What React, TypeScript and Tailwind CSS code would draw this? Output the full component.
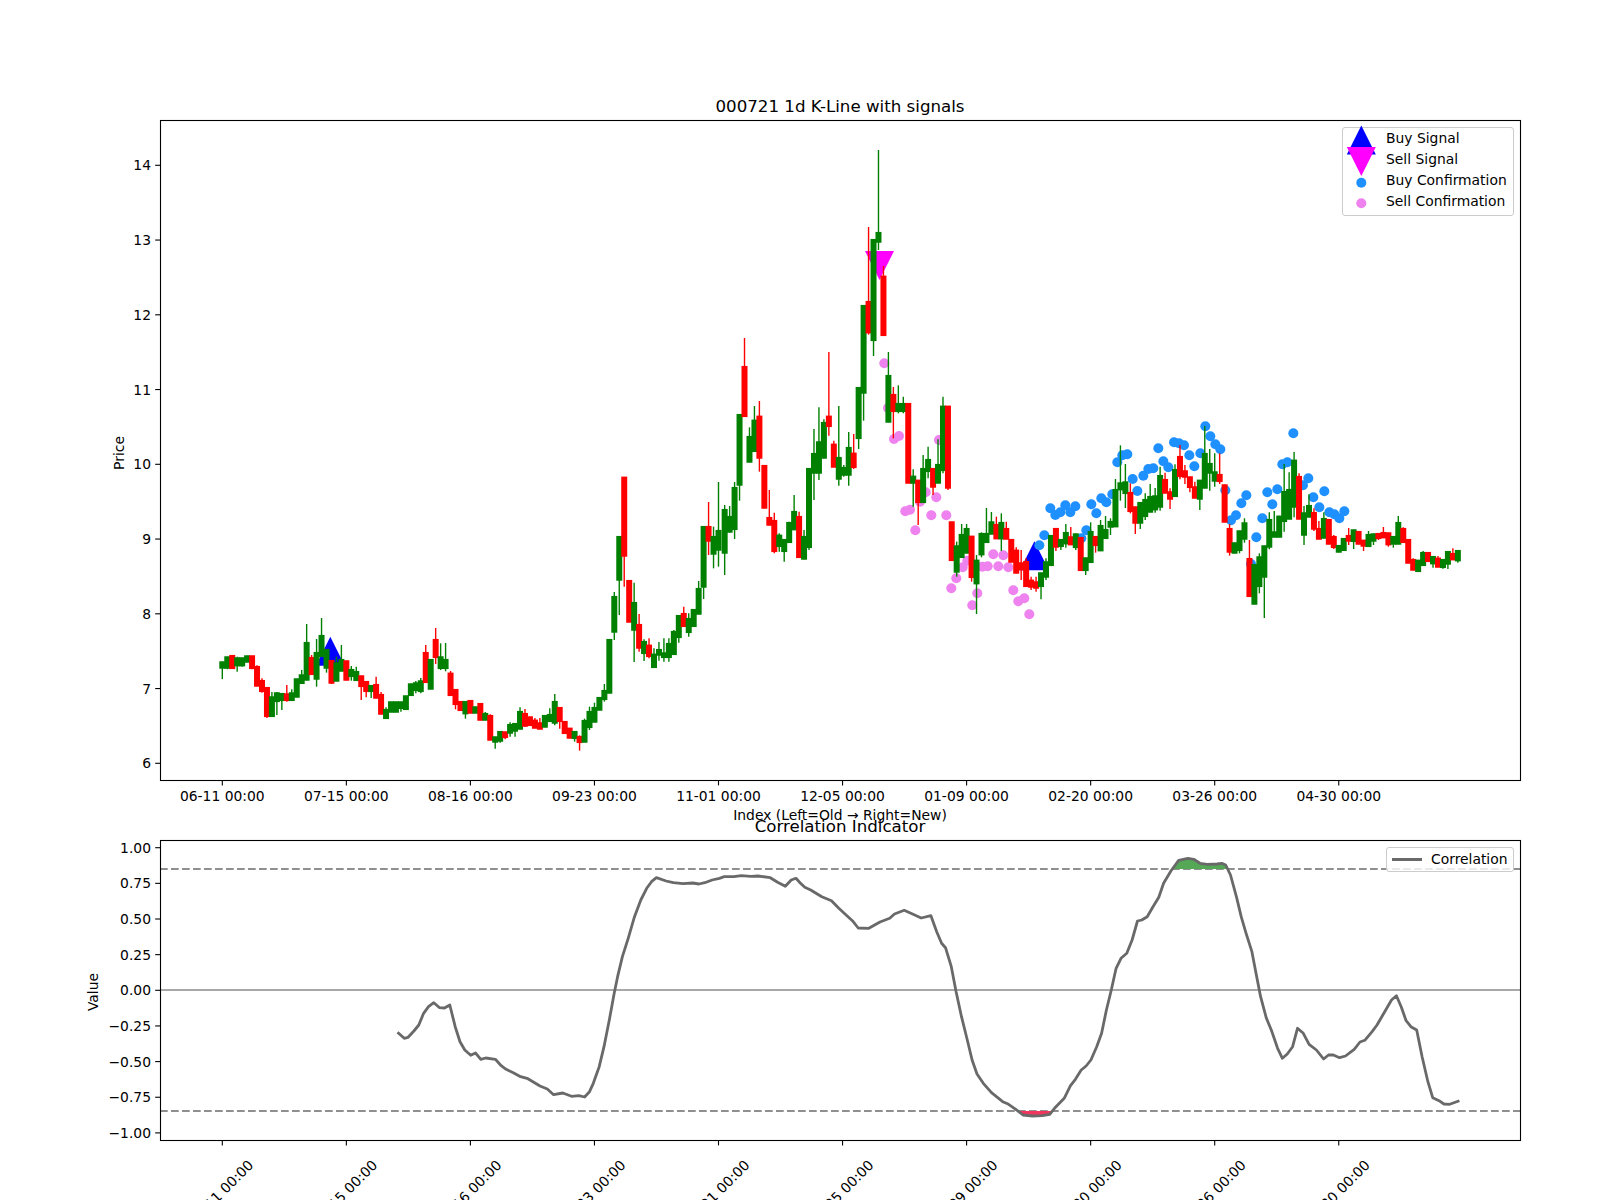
import React from 'react';

type Row = [string, number, number, number, number];
type Candle = { up: boolean; wickTop: number; top: number; bottom: number; wickBottom: number };

// readings are in 3x crop pixels, y = base + z / 3
const seg = (base: number, rows: Row[]): Candle[] =>
  rows.map(([c, a, b, d, e]) => ({
    up: c === 'g',
    wickTop: base + a / 3,
    top: base + b / 3,
    bottom: base + d / 3,
    wickBottom: base + e / 3,
  }));

const candles: Candle[] = [
  ...seg(480, [
    ['g', 545, 545, 565, 597], ['g', 530, 530, 565, 568], ['r', 526, 526, 566, 566], ['g', 530, 533, 558, 575],
    ['g', 533, 533, 558, 560], ['g', 527, 527, 547, 547], ['r', 527, 527, 566, 568], ['r', 556, 559, 619, 619],
    ['r', 595, 601, 635, 638], ['r', 622, 622, 710, 714], ['g', 636, 650, 710, 710], ['g', 636, 638, 665, 705],
    ['g', 640, 640, 662, 690], ['r', 615, 641, 662, 665], ['g', 628, 638, 662, 662], ['g', 596, 596, 652, 652],
    ['g', 570, 584, 611, 611], ['g', 432, 487, 601, 601], ['r', 525, 532, 584, 584], ['g', 477, 517, 598, 620],
    ['g', 414, 466, 530, 530], ['g', 508, 508, 565, 578], ['r', 540, 541, 610, 612], ['g', 530, 548, 604, 604],
    ['g', 495, 538, 574, 574], ['r', 542, 542, 601, 601], ['g', 558, 568, 590, 602], ['g', 560, 574, 602, 602],
    ['r', 587, 587, 620, 660], ['r', 604, 604, 635, 652], ['g', 616, 616, 635, 654], ['r', 590, 613, 655, 655],
    ['r', 636, 643, 703, 703], ['g', 682, 688, 716, 716], ['g', 665, 665, 697, 697], ['g', 665, 665, 697, 697],
    ['g', 665, 665, 686, 695], ['g', 647, 647, 689, 689], ['g', 611, 611, 647, 647], ['g', 603, 608, 632, 640],
    ['g', 594, 602, 635, 640], ['r', 495, 517, 608, 608], ['g', 538, 538, 628, 628], ['r', 444, 478, 533, 552],
    ['g', 490, 530, 566, 570], ['g', 489, 538, 566, 574], ['r', 573, 579, 647, 647], ['r', 628, 628, 674, 688],
    ['r', 664, 664, 692, 692], ['g', 664, 664, 702, 716], ['r', 661, 661, 700, 700], ['g', 680, 680, 700, 700],
    ['r', 670, 670, 721, 721], ['g', 696, 700, 721, 721], ['r', 703, 706, 781, 781], ['g', 770, 770, 787, 806],
    ['g', 754, 754, 784, 788], ['r', 755, 755, 773, 778], ['g', 727, 733, 760, 770], ['g', 730, 730, 754, 770],
    ['g', 682, 694, 748, 748], ['r', 687, 700, 739, 741], ['r', 710, 710, 737, 737], ['r', 714, 720, 745, 745],
    ['r', 714, 728, 748, 748], ['g', 706, 706, 742, 742], ['g', 685, 703, 725, 725], ['g', 642, 664, 730, 736],
    ['r', 682, 682, 725, 746], ['r', 724, 724, 761, 761], ['r', 744, 744, 775, 775], ['g', 754, 754, 776, 785],
    ['r', 766, 769, 788, 812], ['g', 716, 721, 787, 787], ['g', 680, 694, 743, 750], ['g', 668, 682, 727, 727],
    ['g', 652, 652, 691, 691], ['g', 612, 631, 659, 665], ['g', 478, 478, 640, 640], ['g', 336, 349, 457, 480],
    ['g', 169, 169, 301, 405], ['r', -9, -9, 229, 320], ['r', 301, 301, 427, 427], ['g', 308, 367, 451, 546],
    ['r', 402, 433, 505, 515], ['g', 478, 484, 521, 543],
  ]),
  ...seg(470, [
    ['r', 505, 525, 560, 565], ['g', 535, 552, 593, 593], ['g', 516, 538, 556, 572], ['g', 505, 548, 563, 575],
    ['g', 505, 520, 563, 575], ['g', 480, 484, 554, 554], ['g', 436, 436, 503, 518], ['r', 410, 430, 470, 470],
    ['g', 430, 445, 488, 500], ['g', 418, 418, 470, 470], ['g', 333, 355, 433, 433], ['g', 169, 169, 352, 387],
    ['r', 96, 169, 214, 255], ['g', 170, 199, 253, 295], ['g', 36, 181, 241, 290], ['g', 105, 118, 250, 315],
    ['g', 108, 139, 187, 187], ['g', 36, 52, 179, 207], ['g', -167, -167, 46, 92],
  ]),
  ...seg(130, [
    ['r', 624, 709, 860, 860], ['g', 892, 919, 997, 997], ['g', 828, 870, 965, 965], ['r', 813, 858, 985, 1025],
    ['r', 1006, 1006, 1135, 1135], ['r', 1080, 1162, 1186, 1186], ['r', 1148, 1171, 1265, 1270], ['g', 1210, 1215, 1250, 1265],
    ['g', 1228, 1228, 1265, 1295], ['g', 1175, 1177, 1238, 1238], ['g', 1095, 1144, 1200, 1200], ['r', 1145, 1159, 1283, 1283],
    ['g', 1200, 1219, 1288, 1288], ['g', 1015, 1015, 1253, 1260], ['g', 897, 970, 1030, 1110], ['g', 832, 935, 1030, 1050],
    ['g', 868, 877, 985, 985], ['r', 666, 858, 890, 917], ['r', 932, 942, 1012, 1012], ['g', 828, 982, 1048, 1067],
    ['g', 1005, 1012, 1036, 1040], ['g', 906, 952, 1036, 1067], ['r', 912, 969, 1013, 1017], ['g', 772, 772, 926, 957],
    ['g', 526, 526, 790, 872], ['r', 291, 514, 609, 614], ['g', 328, 328, 632, 678], ['g', 60, 307, 337, 360],
    ['r', 408, 438, 617, 617], ['g', 666, 736, 877, 877], ['r', 771, 793, 845, 925], ['g', 766, 820, 845, 850],
    ['g', 800, 820, 845, 850], ['r', 820, 820, 1060, 1060], ['g', 1018, 1038, 1060, 1130], ['r', 1050, 1050, 1118, 1185],
    ['g', 975, 1015, 1118, 1118], ['g', 950, 988, 1025, 1045], ['r', 1015, 1015, 1072, 1095], ['g', 928, 1003, 1060, 1060],
    ['g', 800, 828, 1022, 1030], ['r', 828, 828, 1075, 1080],
  ]),
  ...seg(470, [
    ['r', 155, 155, 272, 272], ['g', 215, 227, 307, 320], ['g', 162, 193, 263, 263], ['g', 162, 175, 250, 250],
    ['r', 198, 198, 323, 335], ['g', 255, 270, 342, 432], ['g', 187, 190, 255, 262], ['g', 114, 190, 218, 218],
    ['g', 126, 155, 193, 193], ['r', 140, 163, 207, 207], ['g', 130, 157, 207, 243], ['r', 155, 175, 208, 208],
    ['r', 208, 208, 277, 277], ['r', 232, 240, 310, 310],
  ]),
  ...seg(380, [
    ['r', 510, 548, 570, 600], ['r', 535, 544, 620, 620], ['r', 590, 600, 622, 630], ['r', 590, 605, 625, 635],
    ['g', 578, 578, 620, 658], ['g', 535, 545, 592, 600], ['g', 466, 466, 557, 557], ['r', 445, 445, 502, 513],
    ['g', 478, 478, 500, 510], ['g', 432, 457, 492, 503], ['r', 441, 470, 495, 495], ['g', 461, 461, 503, 510],
    ['r', 472, 472, 572, 572], ['g', 533, 533, 572, 585], ['g', 427, 454, 548, 548], ['r', 469, 469, 497, 518],
    ['g', 420, 436, 513, 513], ['g', 408, 448, 476, 476], ['g', 415, 424, 442, 465], ['g', 297, 328, 441, 441],
    ['g', 196, 308, 330, 362], ['g', 252, 305, 341, 384], ['r', 310, 337, 395, 400], ['r', 380, 380, 430, 462],
    ['g', 367, 367, 430, 447], ['g', 340, 358, 410, 420], ['g', 312, 349, 397, 397], ['g', 324, 347, 390, 398],
    ['g', 260, 286, 382, 392], ['r', 278, 298, 340, 340], ['r', 325, 335, 358, 387], ['g', 253, 268, 350, 350],
    ['r', 195, 229, 290, 298], ['r', 255, 272, 292, 312], ['r', 290, 290, 323, 337], ['r', 305, 320, 355, 355],
    ['g', 300, 300, 358, 390], ['g', 138, 220, 325, 325], ['g', 207, 250, 280, 332], ['g', 220, 275, 304, 320],
    ['r', 220, 283, 305, 312], ['r', 314, 314, 427, 427], ['r', 432, 445, 517, 527], ['g', 488, 488, 520, 520],
    ['g', 452, 452, 512, 520], ['g', 415, 428, 478, 488], ['r', 480, 535, 650, 650], ['g', 553, 553, 673, 673],
    ['g', 520, 530, 620, 640], ['g', 497, 497, 592, 714], ['g', 397, 418, 502, 508], ['g', 393, 455, 472, 472],
    ['g', 407, 408, 472, 472], ['g', 252, 334, 425, 455], ['g', 277, 328, 418, 418], ['g', 216, 240, 382, 412],
    ['r', 280, 289, 418, 418], ['g', 378, 398, 466, 495], ['g', 343, 376, 412, 412], ['r', 385, 397, 448, 453],
    ['r', 423, 445, 478, 478], ['g', 397, 415, 475, 475], ['r', 418, 418, 493, 493], ['r', 465, 469, 503, 507],
    ['g', 496, 496, 517, 517], ['g', 475, 475, 512, 512], ['r', 444, 466, 484, 495], ['g', 449, 449, 485, 507],
    ['r', 454, 454, 493, 493], ['r', 480, 480, 499, 513], ['g', 453, 463, 500, 500], ['g', 461, 461, 484, 495],
    ['r', 460, 460, 476, 480], ['r', 441, 457, 474, 474], ['r', 458, 458, 495, 500], ['g', 469, 469, 493, 503],
    ['g', 408, 427, 493, 493], ['r', 442, 445, 488, 488], ['r', 478, 478, 550, 550], ['r', 535, 538, 571, 571],
    ['g', 540, 540, 575, 575], ['g', 513, 517, 557, 557], ['r', 517, 517, 545, 545], ['g', 529, 529, 552, 563],
    ['r', 528, 534, 562, 562], ['g', 538, 538, 563, 566], ['g', 514, 514, 553, 567], ['r', 505, 520, 540, 540],
    ['g', 511, 511, 543, 548],
  ]),
];

const buyDots = [
  [58, 496], [73, 466], [91, 385], [106, 405], [121, 397], [136, 376], [151, 397], [166, 379], [184, 475], [199, 451],
  [214, 373], [229, 400], [244, 355], [259, 367], [277, 343], [292, 247], [307, 226], [322, 223], [338, 297], [352, 333],
  [370, 287], [385, 267], [400, 265], [415, 205], [430, 244], [445, 262], [462, 187], [477, 190], [492, 196], [508, 226],
  [523, 259], [541, 220], [556, 139], [571, 169], [586, 193], [601, 208], [616, 331], [633, 421], [648, 406], [664, 370],
  [679, 346], [693, 552], [709, 472], [727, 415], [742, 337], [757, 373], [772, 328], [787, 253], [802, 247], [820, 160],
  [849, 316], [865, 295], [880, 352], [898, 382], [913, 334], [928, 397], [943, 403], [958, 415], [973, 394],
].map(([x, y]) => [1020 + x / 3, 380 + y / 3]);

const sellDots = [
  [884.3, 363.3], [888, 408], [894, 439], [899, 436], [939, 440], [905.3, 511.3], [910, 509.7], [915.3, 530.3],
  [920, 501.7], [925.7, 492.3], [931.3, 515.3], [936.3, 497.3], [946.3, 515.3], [951.3, 588.3], [956.3, 578.3],
  [962.7, 567.3], [967.3, 560.7], [972.3, 605.3], [977.3, 593.3], [982.3, 566.7], [987.7, 566.3], [993.3, 554.3],
  [998.3, 566.3], [1003.3, 555.3], [1008.3, 567.3], [1013.3, 590.3], [1018.3, 601.3], [1024.3, 598.3], [1029.3, 614.3],
];

const corrLeft = [
  [696, 697], [710, 715], [718, 712], [730, 693], [740, 675], [750, 640], [760, 620], [771, 608], [783, 623], [793, 624],
  [804, 615], [815, 680], [825, 725], [835, 750], [847, 766], [857, 759], [868, 778], [878, 774], [898, 778], [910, 797],
  [920, 808], [935, 818], [950, 830], [965, 836], [990, 858], [1005, 867], [1018, 884], [1037, 879], [1055, 889], [1070, 887],
  [1082, 891], [1092, 875], [1100, 850], [1112, 800], [1122, 740], [1133, 660], [1143, 580], [1150, 530], [1160, 470], [1172, 415],
  [1185, 350], [1198, 300], [1210, 265], [1220, 245], [1230, 233], [1250, 243], [1265, 248], [1285, 251], [1305, 249], [1318, 252],
  [1330, 248], [1345, 240], [1360, 235], [1370, 230], [1390, 230], [1405, 227], [1425, 229], [1440, 228], [1465, 233], [1480, 247],
  [1496, 259], [1508, 240], [1518, 235],
].map(([x, y]) => [60 + x / 2.0625, 800 + y / 3]);

const crop8 = ([x, y]: number[]) => [800 + x / 2.0625, 800 + y / 3];

const corrRight = [
  [0, 248], [10, 262], [22, 270], [45, 290], [65, 302], [80, 325], [95, 345], [108, 362], [120, 384], [142, 385],
  [165, 366], [185, 355], [195, 342], [215, 331], [232, 342], [250, 354], [270, 347], [282, 395], [292, 430], [300, 443],
  [312, 500], [322, 575], [333, 650], [345, 720], [355, 780], [365, 822], [378, 850], [395, 878], [418, 905], [428, 911],
  [445, 928], [460, 945], [480, 948], [500, 947], [515, 943], [525, 925], [545, 895], [558, 857], [568, 838], [580, 810],
  [590, 798], [600, 780], [612, 740], [622, 700], [632, 630], [642, 570], [652, 505], [662, 475], [674, 460], [685, 420],
  [696, 363], [705, 360], [716, 350], [728, 320], [740, 292], [750, 250], [765, 213], [781, 181], [800, 175], [812, 178],
  [825, 190], [840, 193], [860, 192], [870, 190], [878, 195], [888, 225], [900, 290], [910, 350], [920, 400], [932, 455],
  [942, 530], [950, 590], [962, 655], [972, 690], [985, 745], [995, 775], [1005, 762], [1016, 740], [1026, 685], [1038, 700],
  [1050, 733], [1065, 750], [1080, 777], [1090, 765], [1100, 765], [1113, 773], [1125, 768], [1143, 748], [1155, 726], [1165, 721],
  [1180, 695], [1190, 675], [1200, 650], [1212, 620], [1220, 600], [1230, 587], [1240, 620], [1250, 662], [1260, 680], [1272, 690],
  [1283, 770], [1295, 845], [1305, 893], [1318, 902], [1328, 912], [1340, 913], [1360, 902],
].map(crop8);

const overbought = [
  [770, 207], [781, 181], [800, 175], [812, 178], [825, 190], [840, 193], [860, 192], [870, 190], [878, 195], [882, 207],
].map(crop8);
const oversold = [[450, 933], [460, 945], [480, 948], [500, 947], [515, 943], [520, 933]].map(crop8);

const toPoints = (pts: number[][]) => pts.map(([x, y]) => `${x.toFixed(1)},${y.toFixed(1)}`).join(' ');

const xLabels = ['06-11', '07-15', '08-16', '09-23', '11-01', '12-05', '01-09', '02-20', '03-26', '04-30'];
const tickX = (k: number) => 222.3 + 124.05 * k;
// the run from 11-01 to mid December reads about a pixel right of the grid
const candleX = (i: number) => 222.3 + 4.962 * i + (i > 100 && i < 147 ? 1.2 : 0);

const priceTicks = [14, 13, 12, 11, 10, 9, 8, 7, 6];
const priceY = (p: number) => 763.3 - (p - 6) * 74.75;
const corrTicks = ['1.00', '0.75', '0.50', '0.25', '0.00', '−0.25', '−0.50', '−0.75', '−1.00'];
const corrY = (k: number) => 847.7 + k * 35.65;

function Triangle({ x, y, down, color }: { x: number; y: number; down?: boolean; color: string }) {
  const pts = down
    ? `${x - 14.5},${y - 14.5} ${x + 14.5},${y - 14.5} ${x},${y + 14.5}`
    : `${x - 14.5},${y + 14.5} ${x + 14.5},${y + 14.5} ${x},${y - 14.5}`;
  return <polygon points={pts} fill={color} />;
}

function KLinePanel() {
  return (
    <div className="relative h-[820px] w-[1600px]">
      <svg width={1600} height={820} viewBox="0 0 1600 820" className="block overflow-visible">
        <text x={840} y={111.5} textAnchor="middle" className="text-[16.67px] fill-black">000721 1d K-Line with signals</text>
        <text transform="translate(124 453) rotate(-90)" textAnchor="middle" className="text-[13.89px] fill-black">Price</text>

        <Triangle x={330.3} y={651.3} color="#0000ff" />
        <Triangle x={1034.4} y={555.7} color="#0000ff" />
        <Triangle x={879.5} y={265.5} down color="#ff00ff" />
        {buyDots.map(([x, y], i) => <circle key={i} cx={x} cy={y} r={5} fill="#1e90ff" />)}
        {sellDots.map(([x, y], i) => <circle key={i} cx={x} cy={y} r={5} fill="#ee82ee" />)}

        {candles.map((c, i) => {
          const color = c.up ? '#008000' : '#ff0000';
          const x = candleX(i);
          return (
            <g key={i}>
              <line x1={x} x2={x} y1={c.wickTop} y2={c.wickBottom} stroke={color} strokeWidth={1.4} />
              <rect x={x - 3} y={c.top - 0.4} width={6} height={c.bottom - c.top + 0.8} fill={color} />
            </g>
          );
        })}

        <rect x={160.5} y={120.5} width={1360} height={660} fill="none" stroke="#000" strokeWidth={1.1} />
        {priceTicks.map(p => (
          <g key={p}>
            <line x1={155.2} x2={160} y1={priceY(p)} y2={priceY(p)} stroke="#000" strokeWidth={1.1} />
            <text x={151} y={priceY(p) + 5} textAnchor="end" className="text-[13.89px] fill-black">{p}</text>
          </g>
        ))}
        {xLabels.map((d, k) => (
          <g key={d}>
            <line x1={tickX(k)} x2={tickX(k)} y1={781} y2={785.4} stroke="#000" strokeWidth={1.1} />
            <text x={tickX(k)} y={801} textAnchor="middle" className="text-[13.89px] fill-black">{d} 00:00</text>
          </g>
        ))}
        <text x={840} y={820} textAnchor="middle" className="text-[13.89px] fill-black">Index (Left=Old → Right=New)</text>
      </svg>

      <div className="absolute left-[1342px] top-[127px] flex h-[89px] w-[172px] flex-col rounded-[3px] border border-[#cccccc] bg-white/80 pl-[43px] text-[13.89px] leading-[20.9px] text-black">
        <span>Buy Signal</span>
        <span>Sell Signal</span>
        <span>Buy Confirmation</span>
        <span>Sell Confirmation</span>
        <svg width={40} height={89} viewBox="0 0 40 89" className="absolute left-0 top-0 overflow-visible">
          <Triangle x={18.3} y={12} color="#0000ff" />
          <Triangle x={18.3} y={33.5} down color="#ff00ff" />
          <circle cx={18.3} cy={54.7} r={5} fill="#1e90ff" />
          <circle cx={18.3} cy={75.3} r={5} fill="#ee82ee" />
        </svg>
      </div>
    </div>
  );
}

function CorrelationPanel() {
  return (
    <div className="relative h-[380px] w-[1600px]">
      <svg width={1600} height={380} viewBox="0 820 1600 380" className="block overflow-hidden">
        <text x={840} y={831.5} textAnchor="middle" className="text-[16.67px] fill-black">Correlation Indicator</text>
        <text transform="translate(98 992) rotate(-90)" textAnchor="middle" className="text-[13.89px] fill-black">Value</text>

        <line x1={160} x2={1520} y1={990} y2={990} stroke="#a8a8a8" strokeWidth={2} />
        <line x1={160} x2={1520} y1={869} y2={869} stroke="#8f8f8f" strokeWidth={2} strokeDasharray="7.7 3.3" />
        <line x1={160} x2={1520} y1={1111} y2={1111} stroke="#8f8f8f" strokeWidth={2} strokeDasharray="7.7 3.3" />

        <polygon points={toPoints(overbought)} fill="#55a855" />
        <polygon points={toPoints(oversold)} fill="#f0365c" />
        <polyline points={toPoints([...corrLeft, ...corrRight])} fill="none" stroke="#696969" strokeWidth={2.8} strokeLinejoin="round" />

        <rect x={160.5} y={840.5} width={1360} height={300} fill="none" stroke="#000" strokeWidth={1.1} />
        {corrTicks.map((t, k) => (
          <g key={t}>
            <line x1={155.2} x2={160} y1={corrY(k)} y2={corrY(k)} stroke="#000" strokeWidth={1.1} />
            <text x={151} y={corrY(k) + 5} textAnchor="end" className="text-[13.89px] fill-black">{t}</text>
          </g>
        ))}
        {xLabels.map((d, k) => (
          <g key={d}>
            <line x1={tickX(k)} x2={tickX(k)} y1={1141} y2={1145.4} stroke="#000" strokeWidth={1.1} />
            <text
              transform={`translate(${tickX(k) - 1.5} 1192.5) rotate(-45)`}
              y={5}
              textAnchor="middle"
              className="text-[13.89px] fill-black"
            >
              {d} 00:00
            </text>
          </g>
        ))}
      </svg>

      <div className="absolute left-[1386px] top-[27px] flex h-[25px] w-[128px] items-center gap-[9px] rounded-[3px] border border-[#cccccc] bg-white/80 pl-[5px] text-[13.89px] text-black">
        <span className="h-[3px] w-[30px] bg-[#696969]" />
        <span>Correlation</span>
      </div>
    </div>
  );
}

export default function App() {
  return (
    <div className="flex h-[1200px] w-[1600px] flex-col overflow-hidden bg-white font-['DejaVu_Sans',sans-serif]">
      <KLinePanel />
      <CorrelationPanel />
    </div>
  );
}
